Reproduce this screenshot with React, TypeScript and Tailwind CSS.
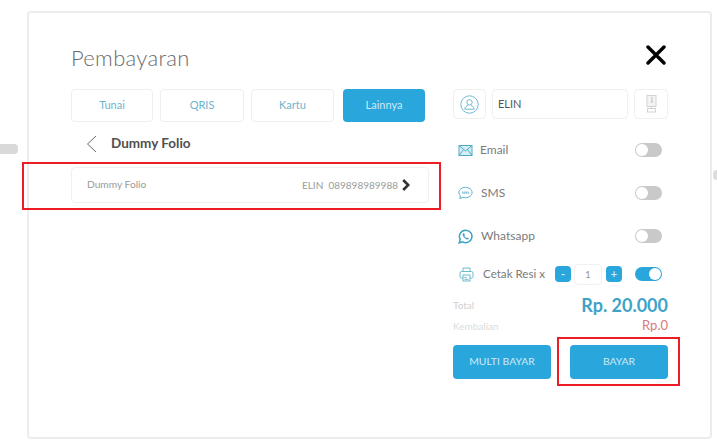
const toggleOff = (
  <div className="flex h-[14px] w-[27px] items-center rounded-full bg-[#c9c9c9] pl-px">
    <div className="h-3 w-3 rounded-full bg-white" />
  </div>
);

const toggleOn = (
  <div className="flex h-[14px] w-[27px] items-center justify-end rounded-full bg-[#29a6dc] pr-px">
    <div className="h-3 w-3 rounded-full bg-white" />
  </div>
);

function MailIcon() {
  return (
    <svg width="15" height="13" viewBox="0 0 15 13" fill="#d6eef5" stroke="#4fa9c6" strokeWidth="1">
      <rect x="1" y="1.5" width="13" height="10" />
      <path d="M1 1.5l6.5 5.5 6.5-5.5M1 11.5l4.6-6M14 11.5l-4.6-6" fill="none" />
    </svg>
  );
}

function SmsIcon() {
  return (
    <svg width="16" height="14" viewBox="0 0 16 14" fill="none" stroke="#4fa9c6">
      <path d="M8 1c3.900 0 7 2.400 7 5.500S11.900 12 8 12c-1 0-2-.15-2.900-.45L2 13l.5-3C1.500 9 1 7.800 1 6.500 1 3.400 4.100 1 8 1z" strokeWidth="1" />
      <path d="M4.500 6.500h7" strokeWidth="2.400" strokeDasharray="1.500 .5" stroke="#7fc0d6" />
    </svg>
  );
}

function WhatsappIcon() {
  return (
    <svg width="15" height="15" viewBox="0 0 15 15" fill="none">
      <path d="M7.700 1.200a6.200 6.200 0 1 1-3 11.600L1.200 13.800l1-3.400a6.200 6.200 0 0 1 5.500-9.200z" stroke="#3fa3c2" strokeWidth="1.500" />
      <path d="M5.300 4.300c-.9.700-.8 1.900 0 3.200.9 1.500 2.100 2.500 3.500 2.900 1 .3 1.900-.2 2.100-1.100l-1.600-.9-.8.700c-.9-.4-1.700-1.200-2.200-2.200l.6-.8-.8-1.800z" fill="#3fa3c2" />
    </svg>
  );
}

function PrinterIcon() {
  return (
    <svg width="15" height="15" viewBox="0 0 15 15" fill="none" stroke="#6fb9d0" strokeWidth="1">
      <path d="M4 4.500V1h7v3.500" />
      <rect x="1" y="4.500" width="13" height="6.500" rx="1.500" />
      <rect x="4" y="8" width="7" height="6" fill="#fff" />
      <path d="M5.500 10.500h2M5.500 12.300h4" />
    </svg>
  );
}

function UserIcon() {
  return (
    <svg width="19" height="19" viewBox="0 0 19 19" fill="none" stroke="#6fbad1" strokeWidth="1">
      <circle cx="9.500" cy="9.500" r="8.700" />
      <circle cx="9.500" cy="7.300" r="2.700" />
      <path d="M4.800 14.200c0-2.200 1.800-3.300 3.200-3.700M14.200 14.200c0-2.200-1.800-3.300-3.200-3.700M4.800 14.200h9.400" />
    </svg>
  );
}

function DeviceIcon() {
  return (
    <svg width="11" height="18" viewBox="0 0 11 18" fill="none" stroke="#d2d2d2" strokeWidth="1">
      <rect x="1" y="0.500" width="9" height="11" fill="#f4f4f4" />
      <path d="M5 3l1-.6V7M4.500 7h2.500" strokeWidth="0.700" stroke="#b0b0b0" />
      <path d="M5.500 11.500v2" />
      <rect x="1.500" y="13.500" width="8" height="3.500" />
    </svg>
  );
}

function ContactRow({ icon, label, gap }: { icon: React.ReactNode; label: string; gap: string }) {
  return (
    <div className="flex h-[14px] items-center justify-between pl-[5px] pr-[6px]">
      <div className={`flex items-center ${gap}`}>
        <div className="flex w-[15px] justify-center">{icon}</div>
        <span className="text-[12px] text-[#7a7a7a]">{label}</span>
      </div>
      {toggleOff}
    </div>
  );
}

const tabs = [
  { label: "Tunai", width: "w-[82px]", margin: "mr-[7px]" },
  { label: "QRIS", width: "w-[84px]", margin: "mr-[7px]" },
  { label: "Kartu", width: "w-[83px]", margin: "mr-[9px]" },
];

export default function App() {
  return (
    <div
      className="relative h-[448px] w-[717px] overflow-hidden bg-white pl-[27px] pt-[11px]"
      style={{ fontFamily: "Lato, 'Open Sans', sans-serif" }}
    >
      {/* grey bits of the page behind the dialog */}
      <div className="absolute left-0 top-[144px] h-[10px] w-[18px] rounded-r-sm bg-[#d9d9d9]" />
      <div className="absolute left-[713px] top-[170px] h-[10px] w-1 rounded-l-sm bg-[#dcdcdc]" />

      <div className="h-[428px] w-[685px] rounded-sm border-2 border-[#ececec] pl-[42px] pr-[42px] pt-[32px]">
        <div className="flex items-start justify-between pr-[2px]">
          <h1 className="text-[22px] font-light leading-[26px] tracking-[0.3px] text-[#6a6a6a]">Pembayaran</h1>
          <svg width="20" height="20" viewBox="0 0 20 20" stroke="#000" strokeWidth="3.400" strokeLinecap="round">
            <path d="M2 2l16 16M18 2L2 18" />
          </svg>
        </div>

        <div className="mt-[18px] flex justify-between">
          <div className="w-[358px]">
            <div className="flex">
              {tabs.map((t) => (
                <div
                  key={t.label}
                  className={`flex h-[33px] items-center justify-center rounded border border-[#eeeeee] text-[11px] text-[#6cb6cf] ${t.width} ${t.margin}`}
                >
                  {t.label}
                </div>
              ))}
              <div className="flex h-[33px] w-[82px] items-center justify-center rounded bg-[#29a6dc] text-[11px] text-[#cdeaf6]">
                Lainnya
              </div>
            </div>

            <div className="mt-[12px] flex h-[19px] items-center pl-[15px]">
              <svg width="11" height="18" viewBox="0 0 11 18" fill="none" stroke="#555" strokeWidth="0.900">
                <path d="M10 1L1.500 9l8.500 8" />
              </svg>
              <span className="ml-[14px] text-[13.5px] font-bold text-[#505050]">Dummy Folio</span>
            </div>

            <div className="mt-[14px] flex h-9 items-center justify-between rounded border border-[#f0f0f0] pl-[15px] pr-[18px] text-[10.2px] text-[#9a9a9a]">
              <span>Dummy Folio</span>
              <div className="flex items-center gap-1">
                <span className="text-[10px]">ELIN&nbsp; 089898989988</span>
                <svg width="8" height="12" viewBox="0 0 8 12" fill="none" stroke="#333" strokeWidth="2.600">
                  <path d="M1.200 1l5 5-5 5" />
                </svg>
              </div>
            </div>
          </div>

          <div className="w-[215px]">
            <div className="flex gap-[6px]">
              <div className="flex h-[30px] w-[33px] items-center justify-center rounded border border-[#f0f0f0]">
                <UserIcon />
              </div>
              <div className="flex h-[30px] w-[136px] items-center rounded border border-[#f0f0f0] pl-[5px] text-[11px] text-[#555]">
                ELIN
              </div>
              <div className="flex h-[30px] w-[34px] items-center justify-center rounded border border-[#f0f0f0]">
                <DeviceIcon />
              </div>
            </div>

            <div className="mt-[24px] flex flex-col gap-[29px]">
              <ContactRow icon={<MailIcon />} label="Email" gap="gap-[7px]" />
              <ContactRow icon={<SmsIcon />} label="SMS" gap="gap-2" />
              <ContactRow icon={<WhatsappIcon />} label="Whatsapp" gap="gap-2" />
            </div>

            <div className="mt-[20px] flex h-[22px] items-center pl-[6px] pr-[6px]">
              <PrinterIcon />
              <span className="ml-[9px] w-[61px] whitespace-nowrap text-[11.6px] text-[#7a7a7a]">Cetak Resi x</span>
              <div className="ml-[11px] flex h-4 w-4 items-center justify-center rounded-sm bg-[#29a6dc] text-[11px] font-bold text-[#cdeaf6]">-</div>
              <div className="ml-[3px] flex h-[21px] w-7 items-center justify-center rounded border border-[#f0f0f0] text-[10px] text-[#9a9a9a]">1</div>
              <div className="ml-1 flex h-4 w-4 items-center justify-center rounded-sm bg-[#29a6dc] text-[11px] font-bold text-[#cdeaf6]">+</div>
              <div className="ml-auto">{toggleOn}</div>
            </div>

            <div className="mt-[10px] flex h-[20px] items-center justify-between">
              <span className="text-[10px] text-[#cfcfcf]">Total</span>
              <span className="text-[18px] font-bold text-[#3ea3c9]">Rp. 20.000</span>
            </div>
            <div className="mt-px flex h-[20px] items-center justify-between">
              <span className="text-[10px] text-[#dcdcdc]">Kembalian</span>
              <span className="text-[13px] text-[#d97a7a]">Rp.0</span>
            </div>

            <div className="mt-[9px] flex justify-between">
              <div className="flex h-[34px] w-[98px] items-center justify-center rounded-sm bg-[#29a6dc] text-[10.4px] text-[#cdeaf6]">
                MULTI BAYAR
              </div>
              <div className="flex h-[34px] w-[98px] items-center justify-center rounded-sm bg-[#29a6dc] text-[10.4px] text-[#cdeaf6]">
                BAYAR
              </div>
            </div>
          </div>
        </div>
      </div>

      {/* red annotation boxes */}
      <div className="absolute left-[22px] top-[162px] h-[48px] w-[419px] border-2 border-[#ee1c25]" />
      <div className="absolute left-[557px] top-[337px] h-[49px] w-[123px] border-2 border-[#ee1c25]" />
    </div>
  );
}
